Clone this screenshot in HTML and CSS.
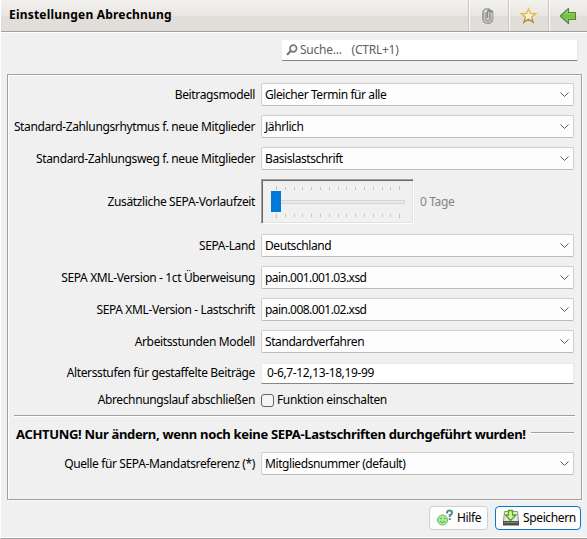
FILE: index.html
```html
<!DOCTYPE html>
<html lang="de">
<head>
<meta charset="utf-8">
<title>Einstellungen Abrechnung</title>
<link rel="stylesheet" href="styles.css">
</head>
<body>
<div class="window">
  <header class="toolbar">
    <h1 class="title">Einstellungen Abrechnung</h1>
    <div class="tool"><svg width="16" height="18" viewBox="0 0 16 18" fill="none"><path d="M5.5 5v6.500a2 2 0 0 0 4.500 0V4.500a1.500 1.500 0 0 0-2.500 0V11M10 3.500a2.500 2.500 0 0 1 2.500 2.500v5.500a4.500 4.500 0 0 1-9.500 0V6a4 4 0 0 1 4-4h1.500a3 3 0 0 1 1.500 1.500" stroke="#858a86" stroke-width="1.700"/><path d="M5.500 5v6.500a2 2 0 0 0 4.500 0V4.500M12.500 6v5.500a4.500 4.500 0 0 1-9.500 0V6a4 4 0 0 1 4-4h1.500" stroke="#c4c7c4" stroke-width=".6"/></svg></div>
    <div class="tool tool-star"><svg width="17" height="17" viewBox="0 0 17 17"><defs><linearGradient id="gold" x2="0" y2="1"><stop stop-color="#f3c632"/><stop offset=".6" stop-color="#dfb13a"/><stop offset="1" stop-color="#a98336"/></linearGradient></defs><path d="M8.500 1.700l1.900 4.700 5.200.3-4 3.300 1.400 5.100-4.500-2.900-4.500 2.900 1.400-5.100-4-3.300 5.200-.3z" fill="#f3f0e6" stroke="url(#gold)" stroke-width="1.400"/></svg></div>
    <div class="tool tool-back"><svg width="18" height="18" viewBox="0 0 18 18"><defs><linearGradient id="leaf" x2="0" y2="1"><stop stop-color="#b4e08b"/><stop offset=".5" stop-color="#79bd47"/><stop offset="1" stop-color="#95d766"/></linearGradient></defs><path d="M1.300 9L9.500 1.500V5.500H16.500V12.500H9.500V16.500z" fill="url(#leaf)" stroke="#4b8838" stroke-width="1.100" stroke-linejoin="round"/></svg></div>
  </header>

  <div class="search">
    <svg width="12" height="12" viewBox="0 0 12 12" fill="none" stroke="#777"><circle cx="7.300" cy="4.500" r="3.300" stroke-width="1.700"/><path d="M4.800 7L1 10.800" stroke-width="2.200"/></svg>
    <span class="hint">Suche...</span><span class="hint shortcut">(CTRL+1)</span>
  </div>

  <main class="panel">
    <div class="row"><label class="label">Beitragsmodell</label><div class="select"><span>Gleicher Termin für alle</span><svg class="chevron" viewBox="0 0 9 5"><path d="M.5.5l4 4 4-4"/></svg></div></div>
    <div class="row"><label class="label">Standard-Zahlungsrhytmus f. neue Mitglieder</label><div class="select"><span>Jährlich</span><svg class="chevron" viewBox="0 0 9 5"><path d="M.5.5l4 4 4-4"/></svg></div></div>
    <div class="row"><label class="label">Standard-Zahlungsweg f. neue Mitglieder</label><div class="select"><span>Basislastschrift</span><svg class="chevron" viewBox="0 0 9 5"><path d="M.5.5l4 4 4-4"/></svg></div></div>
    <div class="row row-slider"><label class="label">Zusätzliche SEPA-Vorlaufzeit</label>
      <div class="slider">
        <svg width="149" height="41" viewBox="0 0 149 41" shape-rendering="crispEdges">
          <path d="M13.500 5v4M22.500 6v3M31.500 6v3M39.500 6v3M48.500 6v3M57.500 6v3M66.500 6v3M75.500 6v3M83.500 6v3M92.500 6v3M101.500 6v3M110.500 6v3M119.500 6v3M127.500 6v3M136.500 5v4M13.500 33v4M22.500 33v3M31.500 33v3M39.500 33v3M48.500 33v3M57.500 33v3M66.500 33v3M75.500 33v3M83.500 33v3M92.500 33v3M101.500 33v3M110.500 33v3M119.500 33v3M127.500 33v3M136.500 33v4" stroke="#c4c4c4"/>
          <rect x="8.500" y="19.500" width="133" height="3" fill="#e7eaea" stroke="#d6d6d6"/>
          <rect x="8" y="10" width="10" height="21" fill="#007ad9"/>
        </svg>
      </div><span class="days">0 Tage</span></div>
    <div class="row"><label class="label">SEPA-Land</label><div class="select"><span>Deutschland</span><svg class="chevron" viewBox="0 0 9 5"><path d="M.5.5l4 4 4-4"/></svg></div></div>
    <div class="row"><label class="label">SEPA XML-Version - 1ct Überweisung</label><div class="select"><span class="schema">pain.001.001.03.xsd</span><svg class="chevron" viewBox="0 0 9 5"><path d="M.5.5l4 4 4-4"/></svg></div></div>
    <div class="row"><label class="label">SEPA XML-Version - Lastschrift</label><div class="select"><span class="schema">pain.008.001.02.xsd</span><svg class="chevron" viewBox="0 0 9 5"><path d="M.5.5l4 4 4-4"/></svg></div></div>
    <div class="row"><label class="label">Arbeitsstunden Modell</label><div class="select"><span>Standardverfahren</span><svg class="chevron" viewBox="0 0 9 5"><path d="M.5.5l4 4 4-4"/></svg></div></div>
    <div class="row row-input"><label class="label">Altersstufen für gestaffelte Beiträge</label><div class="input"><span>0-6,7-12,13-18,19-99</span></div></div>
    <div class="row row-check"><label class="label">Abrechnungslauf abschließen</label><span class="checkbox"></span><span class="check-text">Funktion einschalten</span></div>
    <div class="rule"></div>
    <div class="section"><h2 class="warning">ACHTUNG! Nur ändern, wenn noch keine SEPA-Lastschriften durchgeführt wurden!</h2><span class="section-line"></span></div>
    <div class="row"><label class="label">Quelle für SEPA-Mandatsreferenz (*)</label><div class="select"><span>Mitgliedsnummer (default)</span><svg class="chevron" viewBox="0 0 9 5"><path d="M.5.5l4 4 4-4"/></svg></div></div>
  </main>

  <footer class="actions">
    <div class="button help"><svg width="18" height="18" viewBox="0 0 18 18"><circle cx="6.500" cy="11" r="5" fill="#a3ec94" stroke="#72b873"/><path d="M4 9.500h1.500M8 9.500h1.500M4 12.500q2.500 2 5 0" fill="none" stroke="#45904d" stroke-width=".8"/><path d="M11 4.500V3.200Q11.500 1.500 13.500 1.500Q16 1.500 16 3.800Q16 5.500 13.800 6.200V8" fill="none" stroke="#4e8f88" stroke-width="2"/><path d="M12.800 9.200h2v1.800h-2z" fill="#4e8f88"/></svg><span class="help-text">Hilfe</span></div>
    <div class="button save"><svg width="18" height="18" viewBox="0 0 18 18"><path d="M2.500 2.500h13l1 10h-15z" fill="#e4e7e4" stroke="#8e938e"/><path d="M1 12h16v4.500H1z" fill="#4c504c"/><path d="M2 13.500h14" stroke="#818581"/><path d="M6.500 1.500h4v4.500h3.500L8.500 11.500 3.500 6H6.500z" fill="#d3f5a4" stroke="#56a514" stroke-width="1.300"/></svg><span class="save-text">Speichern</span></div>
  </footer>
</div>
</body>
</html>
```
FILE: styles.css
```css
* { box-sizing: border-box; }

body {
  margin: 0;
  background: #f0f0f0;
  color: #000;
  font: 12px/16px "Noto Sans", "Open Sans", sans-serif;
  letter-spacing: -0.37px;
  white-space: nowrap;
}

.window {
  height: 539px;
  display: flex;
  flex-direction: column;
  border-left: 1px solid #fff;
  border-bottom: 1px solid #a0a0a0;
  box-shadow: inset 0 -1px #fff;
}

.toolbar {
  display: flex;
  height: 33px;
  flex: none;
  border-bottom: 1px solid #fff;
  box-shadow: inset 0 -1px #a0a0a0;
  background: linear-gradient(#f3f1ef 0, #e9e6e2 50%, #e1ddd8 51%, #e2dfda 100%);
}

.title {
  flex: 1;
  margin: 0;
  padding: 7px 0 0 8px;
  font-size: 12px;
  line-height: 16px;
  font-weight: 700;
  letter-spacing: 0.2px;
}

.tool {
  width: 40px;
  height: 31px;
  display: flex;
  justify-content: center;
  align-items: center;
  border-left: 1px solid #c9c7c4;
  box-shadow: inset 1px 0 #fbfafa;
}

.tool:first-of-type svg { margin-right: 2px; }
.tool-back { width: 39px; }

.search {
  flex: none;
  display: flex;
  align-items: center;
  width: 296px;
  height: 21px;
  margin: 7px 0 0 281px;
  padding-left: 4px;
  background: #fff;
  border-right: 1px solid #e6e6e6;
  border-bottom: 1px solid #868686;
  color: #606060;
  letter-spacing: -0.25px;
}

.search svg { margin-right: 2px; }
.shortcut { margin-left: 10px; }

.panel {
  flex: none;
  display: flex;
  flex-direction: column;
  gap: 9px;
  width: 575px;
  height: 426px;
  margin: 13px 0 0 6px;
  padding: 8px 6px 0 5px;
  border: 1px solid #a0a0a5;
  box-shadow: inset 1px 1px #fff, 0 1px #fafafa, 1px 0 #fafafa;
}

.row {
  display: flex;
  align-items: center;
  height: 23px;
  flex: none;
}

.label {
  width: 242px;
  margin-right: 6px;
  display: flex;
  justify-content: flex-end;
}

.select {
  display: flex;
  align-items: center;
  justify-content: space-between;
  width: 313px;
  height: 23px;
  padding: 0 4px 0 3px;
  background: #fdfdfd;
  border: 1px solid #cfcfcf;
  border-bottom-color: #bbb;
  border-radius: 2px;
  letter-spacing: -0.42px;
}

.schema { letter-spacing: -0.55px; }

.chevron {
  width: 9px;
  height: 5px;
  overflow: visible;
  fill: none;
  stroke: #5c5c5c;
}

.row-slider { height: 46px; }

.slider {
  width: 153px;
  height: 45px;
  border: 1px solid;
  border-color: #a0a0a0 #fff #fff #a0a0a0;
  box-shadow: inset 1px 1px #696969, inset -1px -1px #e3e3e3;
  margin-top: -1px;
}

.slider svg { display: block; margin: 1px; }
.days { margin-left: 6px; color: #838383; }
.row-input { height: 22px; }

.input {
  display: flex;
  align-items: center;
  width: 313px;
  height: 21px;
  padding-left: 5px;
  background: #fff;
  border: 1px solid #e9e9e9;
  border-bottom-color: #868686;
}

.row-check { height: 14px; }

.checkbox {
  width: 13px;
  height: 13px;
  margin-right: 3px;
  border: 1px solid #626262;
  border-radius: 3px;
  background: #f5f5f5;
}

.rule {
  flex: none;
  height: 2px;
  width: 561px;
  margin: -1px 0 0 1px;
  border-top: 1px solid #a0a0a0;
  border-bottom: 1px solid #fff;
}

.section {
  display: flex;
  align-items: center;
  height: 17px;
  flex: none;
  margin-left: 3px;
}

.warning {
  margin: 0 5px 0 0;
  font-size: 13px;
  line-height: 17px;
  font-weight: 700;
  letter-spacing: -0.32px;
}

.section-line {
  flex: 1;
  height: 2px;
  margin: 0 1px 3px 0;
  border-top: 1px solid #a0a0a0;
  border-bottom: 1px solid #fff;
}

.actions {
  display: flex;
  justify-content: flex-end;
  gap: 7px;
  margin: 6px 6px 0 0;
}

.button {
  display: flex;
  align-items: center;
  height: 24px;
  background: #fdfdfd;
  border: 1px solid #d0d0d0;
  border-radius: 4px;
}

.help { width: 59px; padding-left: 6px; }
.help svg { margin-right: 3px; }
.save { width: 86px; padding-left: 6px; border-color: #0078d4; }
.save svg { margin-right: 3px; }
```
